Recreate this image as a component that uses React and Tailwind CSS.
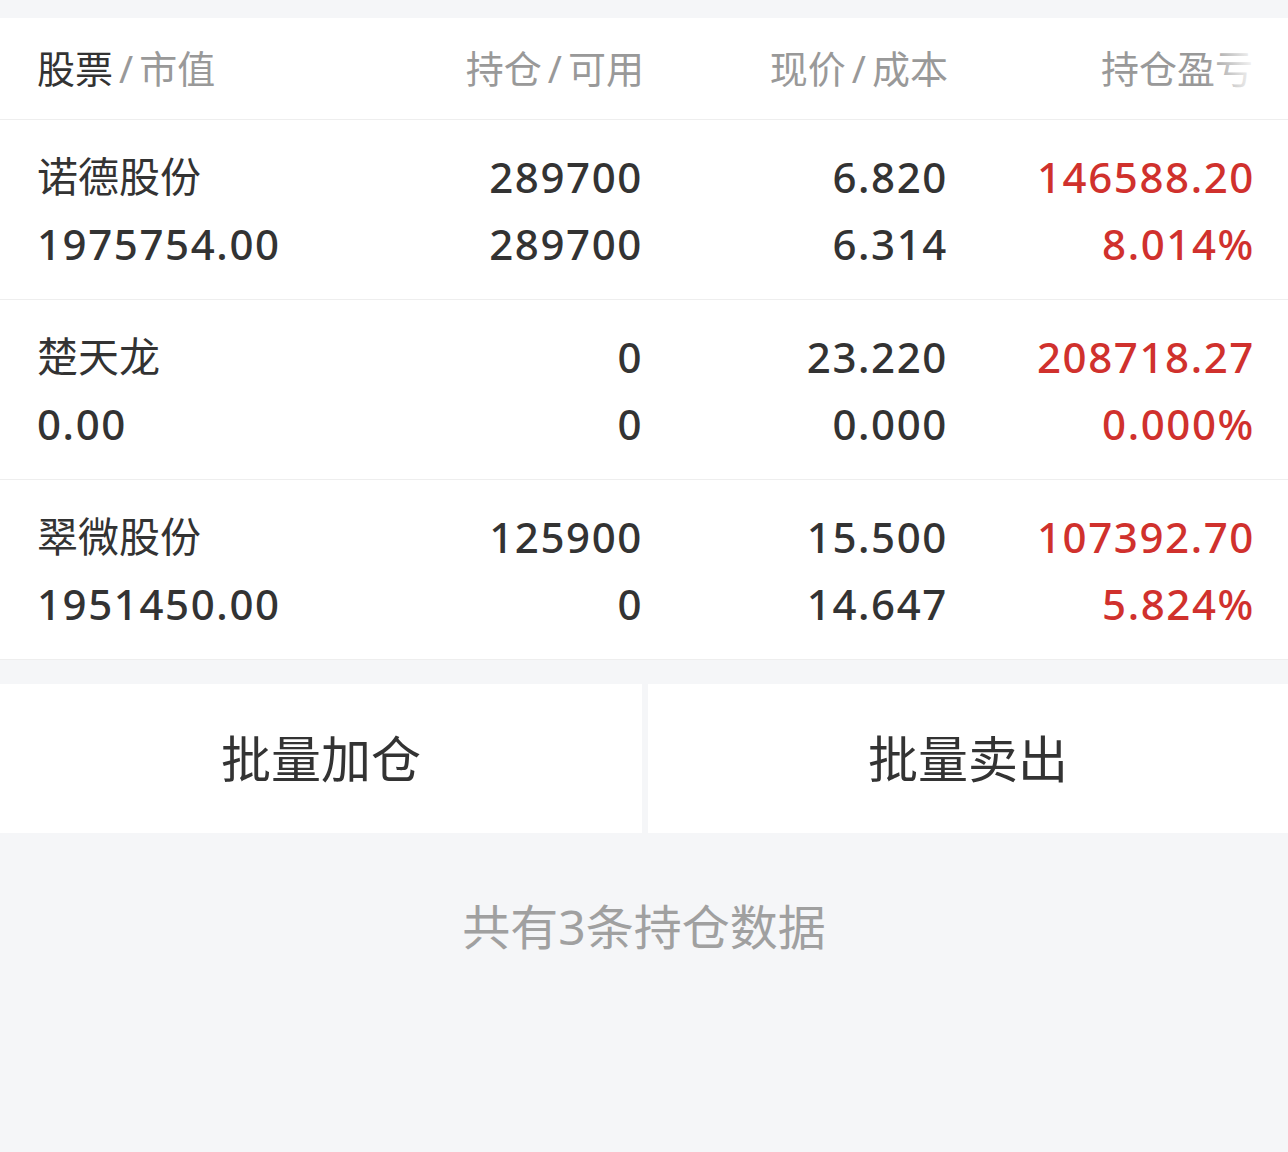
import React from "react";

const rows = [
  { name: "诺德股份", value: "1975754.00", hold: "289700", avail: "289700", price: "6.820", cost: "6.314", pl: "146588.20", pct: "8.014%" },
  { name: "楚天龙", value: "0.00", hold: "0", avail: "0", price: "23.220", cost: "0.000", pl: "208718.27", pct: "0.000%" },
  { name: "翠微股份", value: "1951450.00", hold: "125900", avail: "0", price: "15.500", cost: "14.647", pl: "107392.70", pct: "5.824%" },
];

const font = { fontFamily: '"Noto Sans", "Noto Sans CJK SC", sans-serif' };

function App() {
  return (
    <div className="w-[1288px] min-h-[1152px] bg-[#f5f6f8]" style={font}>
      <div className="h-[18px]" />

      {/* header */}
      <div className="relative grid grid-cols-[302px_305px_304px_305px] pl-[37px] h-[102px] items-center bg-white border-b border-[#eeeeee] text-[38px] text-[#999999]">
        <div>
          <span className="text-[#333333]">股票</span>
          <span className="mx-[6px]">/</span>市值
        </div>
        <div className="text-right">
          持仓<span className="mx-[6px]">/</span>可用
        </div>
        <div className="text-right">
          现价<span className="mx-[6px]">/</span>成本
        </div>
        <div className="text-right">持仓盈亏</div>
        <div className="absolute right-[30px] top-0 h-full w-[52px] bg-gradient-to-r from-white/0 to-white" />
      </div>

      {/* rows */}
      {rows.map((r) => (
        <div
          key={r.name}
          className="grid grid-cols-[301px_305px_305px_307px] pl-[37px] h-[180px] content-center bg-white border-b border-[#eeeeee] text-[#333333]"
        >
          <div className="flex flex-col leading-[67px]">
            <span className="text-[41px]">{r.name}</span>
            <span className="text-[42px] font-medium tracking-[1.6px]">{r.value}</span>
          </div>
          <div className="flex flex-col items-end text-[42px] leading-[67px] font-medium tracking-[1.6px]">
            <span>{r.hold}</span>
            <span>{r.avail}</span>
          </div>
          <div className="flex flex-col items-end text-[42px] leading-[67px] font-medium tracking-[1.6px]">
            <span>{r.price}</span>
            <span>{r.cost}</span>
          </div>
          <div className="flex flex-col items-end text-[42px] leading-[67px] font-medium tracking-[1.6px] text-[#d0312d]">
            <span>{r.pl}</span>
            <span>{r.pct}</span>
          </div>
        </div>
      ))}

      {/* buttons */}
      <div className="mt-[24px] flex gap-[6px] h-[149px]">
        <button className="w-[642px] bg-white text-[50px] text-[#333333] flex items-center justify-center pt-[2px]">
          批量加仓
        </button>
        <button className="flex-1 bg-white text-[50px] text-[#333333] flex items-center justify-center pt-[2px]">
          批量卖出
        </button>
      </div>

      <div className="pt-[58px] text-center text-[48px] text-[#a0a0a0]">
        共有3条持仓数据
      </div>
    </div>
  );
}

export default App;
